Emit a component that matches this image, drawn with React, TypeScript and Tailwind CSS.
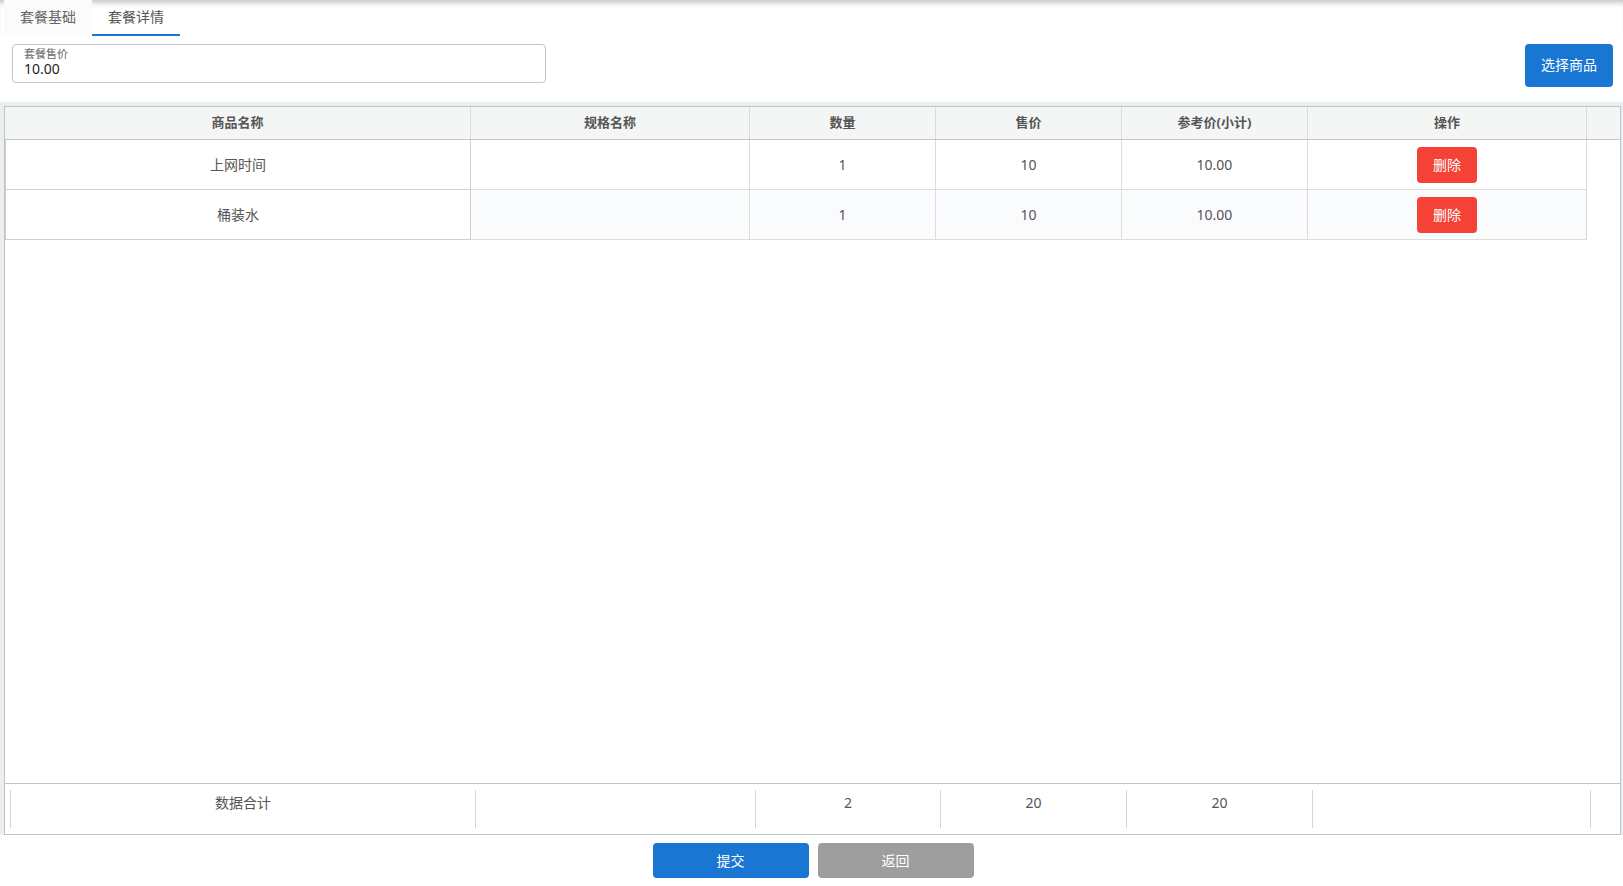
export default function App() {
  const cols = ['w-[466px]', 'w-[279px]', 'w-[186px]', 'w-[186px]', 'w-[186px]', 'w-[279px]']
  const footCols = ['w-[465px]', 'w-[280px]', 'w-[185px]', 'w-[186px]', 'w-[186px]', 'w-[279px]']
  const headers = ['商品名称', '规格名称', '数量', '售价', '参考价(小计)', '操作']
  const rows = [
    { name: '上网时间', spec: '', qty: 1, price: 10, ref: '10.00' },
    { name: '桶装水', spec: '', qty: 1, price: 10, ref: '10.00' },
  ]
  const totals = ['数据合计', '', '2', '20', '20', '']

  return (
    <div
      className="w-[1623px] h-[886px] bg-white flex flex-col text-[14px] text-[#555]"
      style={{ fontFamily: '"Noto Sans", "Noto Sans CJK SC", sans-serif' }}
    >
      {/* Tabs */}
      <div className="h-[36px] flex pl-1 shadow-[inset_0_7px_6px_-5px_rgba(0,0,0,0.28)]">
        <div className="w-[88px] flex items-center justify-center pb-[3px] bg-[#fbfbfb] text-[#666]">套餐基础</div>
        <div className="w-[88px] flex items-center justify-center pb-[1px] border-b-2 border-[#1976d2] text-[#555]">
          套餐详情
        </div>
      </div>

      {/* Price + select */}
      <div className="flex items-start justify-between pl-3 pr-[10px] mt-2 h-[58px]">
        <div className="w-[534px] h-[39px] border border-[#c4c4c4] rounded-[4px] px-[11px] pt-[2px] flex flex-col">
          <span className="text-[11px] leading-[13px] text-[#666]">套餐售价</span>
          <span className="text-[14px] leading-[18px] text-[#1d1d2b]">10.00</span>
        </div>
        <button className="w-[88px] h-[43px] rounded-[4px] bg-[#1976d2] text-white text-[14px] pb-[2px]">选择商品</button>
      </div>

      {/* Table */}
      <div className="bg-[#eceff1] pt-1 pl-1 pr-[2px]">
        <div className="h-[729px] border border-[#bfc4c9] bg-white flex flex-col">
          <div className="h-[33px] flex bg-[#f4f5f5] border-b border-[#c3c7cb] font-bold text-[13px] text-[#555]">
            {headers.map((h, i) => (
              <div key={i} className={`${cols[i]} flex items-center justify-center border-r border-[#d9dcde]`}>
                {h}
              </div>
            ))}
            <div className="flex-1" />
          </div>

          <div className="flex-1">
            {rows.map((r, ri) => (
              <div key={ri} className="flex h-[50px]">
                <div className={`${cols[0]} flex items-center justify-center bg-white border-l border-b border-r border-[#cfcfcf]`}>
                  {r.name}
                </div>
                {[r.spec, String(r.qty), String(r.price), r.ref].map((v, i) => (
                  <div
                    key={i}
                    className={`${cols[i + 1]} flex items-center justify-center border-r border-b border-[#dcdcdc] ${
                      ri === 1 ? 'bg-[#fafbfd]' : 'bg-white'
                    }`}
                  >
                    {v}
                  </div>
                ))}
                <div
                  className={`${cols[5]} flex items-center justify-center border-r border-b border-[#dcdcdc] ${
                    ri === 1 ? 'bg-[#fafbfd]' : 'bg-white'
                  }`}
                >
                  <button className="w-[60px] h-[36px] rounded-[4px] bg-[#f44336] text-white text-[14px]">删除</button>
                </div>
              </div>
            ))}
          </div>

          <div className="h-[51px] border-t border-[#bfc4c9] pl-[5px] pt-[6px]">
            <div className="flex h-[38px]">
              {totals.map((t, i) => (
                <div
                  key={i}
                  className={`${footCols[i]} border-l border-[#d6d6d6] ${i === 5 ? 'border-r' : ''} flex justify-center pt-[2px] leading-[22px]`}
                >
                  {t}
                </div>
              ))}
            </div>
          </div>
        </div>
      </div>

      {/* Actions */}
      <div className="flex justify-center gap-[9px] mt-2 pl-[3px]">
        <button className="w-[156px] h-[35px] rounded-[4px] bg-[#1976d2] text-white text-[14px]">提交</button>
        <button className="w-[156px] h-[35px] rounded-[4px] bg-[#9e9e9e] text-white text-[14px]">返回</button>
      </div>
    </div>
  )
}
